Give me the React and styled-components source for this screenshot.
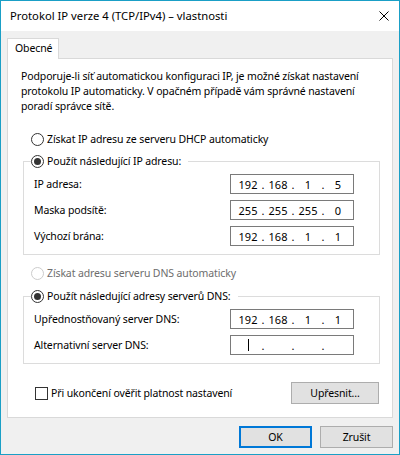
import React from "react";
import styled, { createGlobalStyle, css } from "styled-components";

const Global = createGlobalStyle`
  html, body { margin: 0; padding: 0; background: #ffffff; }
  body { font-family: "Noto Sans", "Segoe UI", sans-serif; font-size: 10.5px; letter-spacing: -0.12px; color: #000; }
  * { box-sizing: border-box; }
`;

const Window = styled.div`
  width: 400px;
  height: 455px;
  border: 1px solid #1a9fc6;
  background: #f0f0f0;
  display: flex;
  flex-direction: column;
`;

const TitleBar = styled.div`
  height: 30px;
  background: #ffffff;
  display: flex;
  align-items: center;
  justify-content: space-between;
  padding: 0 10px 0 9px;
  flex-shrink: 0;
`;

const Title = styled.div`
  font-size: 11.25px;
  letter-spacing: 0;
  color: #000;
  line-height: 14px;
`;

const CloseIcon = styled.svg`
  width: 10px;
  height: 10px;
  display: block;
`;

const Body = styled.div`
  flex: 1;
  display: flex;
  flex-direction: column;
  padding: 7px 6px 0 6px;
`;

const TabStrip = styled.div`
  display: flex;
  height: 20px;
  position: relative;
  z-index: 1;
`;

const Tab = styled.div`
  background: #ffffff;
  border: 1px solid #d9d9d9;
  border-bottom: none;
  height: 21px;
  padding: 0 7px 0 7px;
  line-height: 19px;
  width: 52px;
`;

const Panel = styled.div`
  background: #ffffff;
  border: 1px solid #d9d9d9;
  padding: 10px 12px 13px 15px;
  display: flex;
  flex-direction: column;
`;

const Intro = styled.p`
  margin: 0 0 0 -2px;
  line-height: 15px;
  white-space: nowrap;
`;

const RadioLabel = styled.label`
  display: flex;
  align-items: center;
  height: 13px;
  line-height: 13px;
  margin-top: ${(p) => p.$mt || 0}px;
  margin-left: ${(p) => p.$ml || 0}px;
  color: ${(p) => (p.$disabled ? "#6d6d6d" : "#000")};
  white-space: nowrap;
`;

const Radio = styled.span`
  width: 13px;
  height: 13px;
  border-radius: 50%;
  border: 1px solid ${(p) => (p.$disabled ? "#cccccc" : "#333333")};
  background: #fff;
  margin-right: 3px;
  flex-shrink: 0;
  display: flex;
  align-items: center;
  justify-content: center;
  ${(p) =>
    p.$checked &&
    css`
      &::after {
        content: "";
        width: 7px;
        height: 7px;
        border-radius: 50%;
        background: #333333;
      }
    `}
`;

const Group = styled.fieldset`
  margin: ${(p) => p.$mt || 0}px 0 0 0;
  padding: 6px 25px 8px 0;
  border: 1px solid #dcdcdc;
  min-width: 0;
  display: flex;
  flex-direction: column;
  gap: 6px;
`;

const Legend = styled.legend`
  padding: 0 7px 0 0;
  margin-left: 7px;
  height: 14px;
  display: flex;
  align-items: center;
`;

const FieldRow = styled.div`
  display: flex;
  align-items: center;
  justify-content: space-between;
  height: 20px;
  padding-left: 10px;
`;

const FieldLabel = styled.span`
  line-height: 13px;
`;

const IpBox = styled.div`
  width: 124px;
  height: 20px;
  border: 1px solid #7a7a7a;
  background: #fff;
  display: flex;
  align-items: center;
  padding-left: 4px;
  line-height: 13px;
  letter-spacing: 0;
  font-size: 11px;
`;

const Octet = styled.span`
  width: 26px;
  display: flex;
  justify-content: center;
`;

const Dot = styled.span`
  width: 4px;
  text-align: center;
`;

const Caret = styled.span`
  width: 1px;
  height: 12px;
  background: #000;
  display: block;
`;

const BottomRow = styled.div`
  display: flex;
  align-items: center;
  justify-content: space-between;
  margin-top: 18px;
  padding: 0 1px 0 12px;
`;

const CheckLabel = styled.label`
  display: flex;
  align-items: center;
  line-height: 13px;
`;

const Checkbox = styled.span`
  width: 13px;
  height: 13px;
  border: 1px solid #333333;
  background: #fff;
  margin-right: 3px;
  flex-shrink: 0;
`;

const Button = styled.div`
  width: ${(p) => p.$w || 73}px;
  height: 22px;
  flex-shrink: 0;
  background: #e1e1e1;
  border: ${(p) => (p.$default ? "2px solid #0078d7" : "1px solid #adadad")};
  display: flex;
  align-items: center;
  justify-content: center;
  line-height: 13px;
`;

const Footer = styled.div`
  display: flex;
  justify-content: flex-end;
  gap: 8px;
  margin-top: 8px;
`;

function IpField({ value, caret }) {
  const parts = value ? value.split(".") : ["", "", "", ""];
  return (
    <IpBox>
      {parts.map((p, i) => (
        <React.Fragment key={i}>
          {i > 0 && <Dot>.</Dot>}
          <Octet>{caret && i === 0 ? <Caret /> : p}</Octet>
        </React.Fragment>
      ))}
    </IpBox>
  );
}

export default function App() {
  return (
    <>
      <Global />
      <Window>
        <TitleBar>
          <Title>Protokol IP verze 4 (TCP/IPv4) – vlastnosti</Title>
          <CloseIcon viewBox="0 0 10 10">
            <path d="M0.5 0.5 L9.5 9.5 M9.5 0.5 L0.5 9.5" stroke="#000" strokeWidth="1" fill="none" />
          </CloseIcon>
        </TitleBar>
        <Body>
          <TabStrip>
            <Tab>Obecné</Tab>
          </TabStrip>
          <Panel>
            <Intro>
              Podporuje-li síť automatickou konfiguraci IP, je možné získat nastavení
              <br />
              protokolu IP automaticky. V opačném případě vám správné nastavení
              <br />
              poradí správce sítě.
            </Intro>
            <RadioLabel $mt={19} $ml={8}>
              <Radio />
              Získat IP adresu ze serveru DHCP automaticky
            </RadioLabel>
            <Group $mt={8}>
              <Legend>
                <Radio $checked />
                Použít následující IP adresu:
              </Legend>
              <FieldRow>
                <FieldLabel>IP adresa:</FieldLabel>
                <IpField value="192.168.1.5" />
              </FieldRow>
              <FieldRow>
                <FieldLabel>Maska podsítě:</FieldLabel>
                <IpField value="255.255.255.0" />
              </FieldRow>
              <FieldRow>
                <FieldLabel>Výchozí brána:</FieldLabel>
                <IpField value="192.168.1.1" />
              </FieldRow>
            </Group>
            <RadioLabel $mt={12} $ml={8} $disabled>
              <Radio $disabled />
              Získat adresu serveru DNS automaticky
            </RadioLabel>
            <Group $mt={9}>
              <Legend>
                <Radio $checked />
                Použít následující adresy serverů DNS:
              </Legend>
              <FieldRow>
                <FieldLabel>Upřednostňovaný server DNS:</FieldLabel>
                <IpField value="192.168.1.1" />
              </FieldRow>
              <FieldRow>
                <FieldLabel>Alternativní server DNS:</FieldLabel>
                <IpField caret />
              </FieldRow>
            </Group>
            <BottomRow>
              <CheckLabel>
                <Checkbox />
                Při ukončení ověřit platnost nastavení
              </CheckLabel>
              <Button $w={88}>Upřesnit...</Button>
            </BottomRow>
          </Panel>
          <Footer>
            <Button $default>OK</Button>
            <Button>Zrušit</Button>
          </Footer>
        </Body>
      </Window>
    </>
  );
}
